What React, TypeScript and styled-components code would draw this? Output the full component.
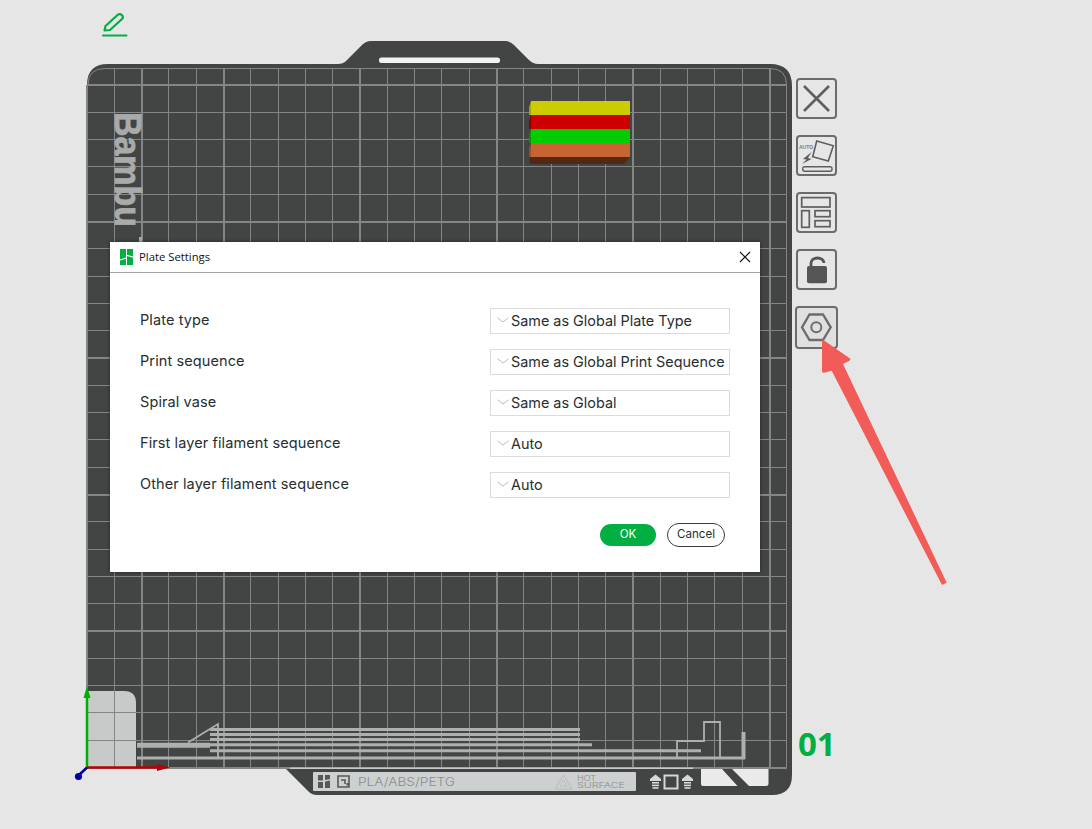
import React from 'react'
import styled, { createGlobalStyle } from 'styled-components'

const GlobalStyle = createGlobalStyle`
  html, body {
    margin: 0;
    padding: 0;
    background: #e6e6e6;
  }
  * {
    box-sizing: border-box;
  }
`

const Page = styled.div`
  position: relative;
  width: 1092px;
  height: 829px;
  padding: 12px 0 0 87px;
  overflow: hidden;
  background: #e6e6e6;
  font-family: Inter, 'Noto Sans', sans-serif;
`

const PencilSvg = styled.svg`
  display: block;
  width: 26px;
  height: 26px;
  margin: 0 0 3px 15px;
`

const Workspace = styled.div`
  display: flex;
  gap: 4px;
  height: 754px;
`

const PlateSvg = styled.svg`
  display: block;
  flex: none;
  width: 705px;
  height: 754px;
  overflow: visible;
`

const Toolbar = styled.div`
  display: flex;
  flex-direction: column;
  gap: 16px;
  padding-top: 37px;
`

const ToolButton = styled.button<{ $large?: boolean }>`
  display: block;
  width: ${({ $large }) => ($large ? 43 : 41)}px;
  height: ${({ $large }) => ($large ? 43 : 41)}px;
  margin-left: ${({ $large }) => ($large ? -1 : 0)}px;
  padding: 0;
  border: 2px solid #6c6c6c;
  border-radius: 4px;
  background: ${({ $large }) => ($large ? '#e0e0e0' : '#e6e6e6')};
  svg {
    display: block;
    margin: -2px;
  }
`

const PlateIndex = styled.div`
  margin: auto 0 34px 2px;
  font-family: 'Open Sans', sans-serif;
  font-size: 33px;
  font-weight: 700;
  line-height: 34px;
  color: #00ae42;
`

const Pointer = styled.svg`
  position: absolute;
  left: 815px;
  top: 335px;
  width: 135px;
  height: 255px;
`

const Dialog = styled.div`
  position: absolute;
  left: 110px;
  top: 242px;
  width: 650px;
  height: 330px;
  background: #fff;
  box-shadow: 0 0 4px rgba(0, 0, 0, 0.45);
`

const TitleBar = styled.div`
  display: flex;
  align-items: center;
  height: 31px;
  padding: 0 9px 1px 10px;
  border-bottom: 1px solid #a3a3a3;
`

const TitleText = styled.div`
  flex: 1;
  margin-left: 6px;
  font-family: 'Open Sans', sans-serif;
  font-size: 11.3px;
  color: #111;
`

const Form = styled.div`
  display: flex;
  flex-direction: column;
  gap: 15px;
  padding: 35px 30px 0;
`

const Row = styled.div`
  display: flex;
  align-items: center;
  justify-content: space-between;
  height: 26px;
`

const RowLabel = styled.div`
  margin-top: -3px;
  font-size: 14.5px;
  letter-spacing: 0.1px;
  color: #262e30;
`

const SelectBox = styled.div`
  display: flex;
  align-items: center;
  gap: 2px;
  width: 240px;
  height: 26px;
  padding: 0 0 2px 6px;
  border: 1px solid #dbdbdb;
  font-size: 14.4px;
  color: #262e30;
  white-space: nowrap;
`

const Footer = styled.div`
  display: flex;
  justify-content: flex-end;
  align-items: center;
  gap: 11px;
  margin-top: 25px;
  padding-right: 35px;
`

const PillButton = styled.button<{ $primary?: boolean }>`
  width: ${({ $primary }) => ($primary ? 56 : 58)}px;
  height: ${({ $primary }) => ($primary ? 22 : 24)}px;
  padding: 0 0 2px;
  border: ${({ $primary }) => ($primary ? 'none' : '1px solid #3c3c3c')};
  border-radius: 12px;
  background: ${({ $primary }) => ($primary ? '#00ae42' : '#fff')};
  color: ${({ $primary }) => ($primary ? '#fff' : '#262e30')};
  font-family: Inter, sans-serif;
  font-size: 11.6px;
`

const STEP = 27.3
const gridIndexes = Array.from({ length: 26 }, (_, i) => i)

// odd widths sit on half pixels so that the lines stay crisp
const snap = (v: number, thick: boolean) => (thick ? Math.round(v) : Math.floor(v) + 0.5)

const Chevron = () => (
  <svg width="12" height="6" viewBox="0 0 12 6" fill="none">
    <path d="M0.5 0.8 L6 5 L11.5 0.8" stroke="#bcbcbc" strokeWidth="1" />
  </svg>
)

const StripArrow = ({ x }: { x: number }) => (
  <g fill="#d6d8d7">
    <path d={`M${x} 779 L${x + 5.5} 774.5 L${x + 11} 779 V781 H${x} Z`} />
    <rect x={x + 2} y={782} width={7} height={1.6} />
    <rect x={x + 2} y={784.6} width={7} height={1.6} />
    <rect x={x + 2.5} y={787.2} width={6} height={1.6} />
  </g>
)

const Plate = () => (
  <PlateSvg viewBox="87 41 705 754">
    <path
      d="M87 85 Q87 64 108 64 H338 Q343 64 346 61 L362 45 Q366 41 371 41 H505 Q510 41 514 45 L529 60 Q533 64 538 64 H770 Q792 64 792 86 V775 Q792 795 772 795 H317 Q312 795 309 792 L285 768 H87 Z"
      fill="#434545"
    />
    <rect x="379" y="57.5" width="121" height="5.5" rx="2.5" fill="#f2f2f2" />

    <path d="M87 767 V691 H124 Q136 691 136 703 V767 Z" fill="#c8caca" />

    {gridIndexes.map((n) => {
      const thick = n % 5 === 0 || n === 2
      const x = snap(87 + STEP * n, thick)
      return (
        <line
          key={`v${n}`}
          x1={x}
          x2={x}
          y1={n === 0 ? 85 : 68}
          y2={768}
          stroke="#838685"
          strokeWidth={thick ? 2 : 1}
        />
      )
    })}
    {gridIndexes.map((n) => {
      const thick = n % 5 === 0
      const y = snap(85 + STEP * n, thick)
      return <line key={`h${n}`} x1={87} x2={787} y1={y} y2={y} stroke="#838685" strokeWidth={thick ? 2 : 1} />
    })}
    <path d="M88 85 Q88 68.5 105 68.5 H770 Q786.5 68.5 786.5 85 V768" fill="none" stroke="#838685" strokeWidth="1" />

    <text
      transform="translate(115 112) rotate(90)"
      fontFamily="'Liberation Sans', sans-serif"
      fontWeight="700"
      fontSize="37"
      fill="#a9abaa"
      stroke="#a9abaa"
      strokeWidth="0.8"
      textLength="115"
      lengthAdjust="spacingAndGlyphs"
    >
      Bambu
    </text>
    <rect x="139" y="237" width="3" height="5" fill="#a9abaa" />

    <g stroke="#aeb0af" fill="none">
      <path d="M137 745.3 H210" strokeWidth="5" />
      <path d="M137 758 H745" strokeWidth="3" />
      <path d="M210 729.5 H580 M210 734.5 H580 M210 739.5 H580 M210 744.7 H592" strokeWidth="3" />
      <path d="M210 750.7 H701" strokeWidth="3" />
      <path d="M188 742.5 L218 724 V757" strokeWidth="1.8" />
      <path d="M677 757 V741 H704 V722 H720 V757" strokeWidth="1.8" />
      <path d="M743.5 732 V759" strokeWidth="4" />
      <path d="M290 768.3 H693" strokeWidth="1.5" stroke="#c8caca" />
    </g>

    <path d="M701 769 H722 L737.5 786 H703 Q701 786 701 784 Z" fill="#eaeaea" />
    <path d="M732 769 H768.5 V784 Q768.5 786 766 786 H749 Z" fill="#eaeaea" />

    <rect x="313" y="772" width="323" height="19" rx="1" fill="#ccd0d0" />
    <path
      d="M318 775 H323 V780.5 H318 Z M325 775 H330 V779 L325 780 Z M318 782 H323 V788 H318 Z M325 781.5 L330 780.5 V788 H325 Z"
      fill="#555857"
    />
    <path d="M338 776 H349 V787 H338 Z" fill="none" stroke="#555857" strokeWidth="1.6" />
    <path d="M341 780 H345 V784" fill="none" stroke="#555857" strokeWidth="1.6" />
    <rect x="346.5" y="783" width="2.5" height="2.5" fill="#555857" />
    <text
      x="358"
      y="786"
      fontFamily="Inter, sans-serif"
      fontWeight="300"
      fontSize="12"
      fill="#8a8e8d"
      textLength="97"
      lengthAdjust="spacingAndGlyphs"
    >
      PLA/ABS/PETG
    </text>
    <path d="M563.5 775 L572 789 H555 Z" fill="none" stroke="#b4b8b7" strokeWidth="0.8" />
    <path d="M563.5 780 L567 786 H560 Z" fill="none" stroke="#b4b8b7" strokeWidth="0.6" />
    <text
      x="577"
      y="780.5"
      fontFamily="Inter, sans-serif"
      fontWeight="300"
      fontSize="7"
      fill="#8a8e8d"
      textLength="19"
      lengthAdjust="spacingAndGlyphs"
    >
      HOT
    </text>
    <text
      x="577"
      y="788"
      fontFamily="Inter, sans-serif"
      fontWeight="300"
      fontSize="7"
      fill="#8a8e8d"
      textLength="48"
      lengthAdjust="spacingAndGlyphs"
    >
      SURFACE
    </text>
    <StripArrow x={650} />
    <rect x="664.5" y="775.5" width="13" height="13" fill="none" stroke="#d6d8d7" strokeWidth="2" />
    <StripArrow x={682} />

    <path d="M531 101 L529 107 V115 H531 Z" fill="#a3a300" />
    <path d="M531 115 L529 121 V129 H531 Z" fill="#8f0000" />
    <path d="M531 129 L529 135 V143 H531 Z" fill="#009a00" />
    <path d="M531 143 L529 149 V157 H531 Z" fill="#96502a" />
    <rect x="531" y="101" width="99" height="14" fill="#cccc00" />
    <rect x="531" y="115" width="99" height="14" fill="#cc0000" />
    <rect x="531" y="129" width="99" height="14" fill="#00cc00" />
    <rect x="531" y="143" width="99" height="14" fill="#c86432" />
    <path d="M529.5 157 H630 L624 164 H529.5 Z" fill="#502814" />

    <path d="M87 767 V694" stroke="#00b000" strokeWidth="2.5" />
    <path d="M87 686 L90.5 698 H83.5 Z" fill="#00b000" />
    <path d="M87 767.5 H158" stroke="#b80000" strokeWidth="2.5" />
    <path d="M170 767.5 L157 771 V764 Z" fill="#b80000" />
    <path d="M87 767.5 L79 775" stroke="#0000a8" strokeWidth="2.5" />
    <circle cx="78.5" cy="776.5" r="3.6" fill="#0000a8" />
  </PlateSvg>
)

const App = () => {
  const rows = [
    { label: 'Plate type', value: 'Same as Global Plate Type' },
    { label: 'Print sequence', value: 'Same as Global Print Sequence' },
    { label: 'Spiral vase', value: 'Same as Global' },
    { label: 'First layer filament sequence', value: 'Auto' },
    { label: 'Other layer filament sequence', value: 'Auto' },
  ]

  return (
    <Page>
      <GlobalStyle />
      <PencilSvg viewBox="0 0 26 26" fill="none">
        <path
          d="M2.5 18.5 L3.5 14 L15.5 3 Q17.8 1.2 19.8 3 Q21.8 5.2 20 7 L8 18 Z"
          stroke="#00ae42"
          strokeWidth="2.2"
          strokeLinejoin="round"
        />
        <path d="M1 23.5 H24.5" stroke="#00ae42" strokeWidth="2" strokeLinecap="round" />
      </PencilSvg>

      <Workspace>
        <Plate />
        <Toolbar>
          <ToolButton>
            <svg width="41" height="41" viewBox="0 0 41 41" fill="none">
              <path d="M8 8 L33 33 M33 8 L8 33" stroke="#5f5f5f" strokeWidth="2.6" />
            </svg>
          </ToolButton>
          <ToolButton>
            <svg width="41" height="41" viewBox="0 0 41 41" fill="none">
              <text x="3" y="14" fontFamily="'Liberation Sans', sans-serif" fontWeight="700" fontSize="5" fill="#7a7a7a">
                AUTO
              </text>
              <path d="M20.7 6 L37.3 10.7 L32.3 26 L16.7 21.7 Z" stroke="#5f5f5f" strokeWidth="1.6" />
              <path d="M15.5 17 L7 24 L10.5 24.5 L6 29 L15.5 24 L12 23 Z" fill="#5f5f5f" />
              <rect x="6.7" y="31.7" width="29.3" height="4.6" rx="2" stroke="#5f5f5f" strokeWidth="1.4" />
            </svg>
          </ToolButton>
          <ToolButton>
            <svg width="41" height="41" viewBox="0 0 41 41" fill="none" stroke="#5f5f5f" strokeWidth="1.7">
              <rect x="5.7" y="5.6" width="28.3" height="9.4" />
              <rect x="5.7" y="18.7" width="7.6" height="16.6" />
              <rect x="19" y="18.7" width="15" height="6" />
              <rect x="19" y="28.7" width="15" height="6" />
            </svg>
          </ToolButton>
          <ToolButton>
            <svg width="41" height="41" viewBox="0 0 41 41" fill="none">
              <rect x="11" y="17" width="20" height="17.3" rx="2" fill="#555" />
              <path d="M15 17 V14 a6.5 5 0 0 1 13 0" stroke="#555" strokeWidth="2.8" />
            </svg>
          </ToolButton>
          <ToolButton $large>
            <svg width="43" height="43" viewBox="0 0 43 43" fill="none">
              <path d="M7 21.3 L14.5 8.5 H28 L35.7 21.3 L28 34 H14.5 Z" stroke="#6c6c6c" strokeWidth="2.3" />
              <circle cx="21.3" cy="21.3" r="5" stroke="#6c6c6c" strokeWidth="2" />
            </svg>
          </ToolButton>
          <PlateIndex>01</PlateIndex>
        </Toolbar>
      </Workspace>

      <Pointer viewBox="815 335 135 255">
        <path
          d="M822.7 339.5 L850 358.5 Q851 360 849 361 L843 364 L946.7 582.7 L942 585 L831.7 370.7 L824 372.7 Q822 373 822 371 V341 Q822 339 822.7 339.5 Z"
          fill="#f25c58"
        />
      </Pointer>

      <Dialog>
        <TitleBar>
          <svg width="13" height="16" viewBox="0 0 13 16">
            <path d="M0 0 H6 V8.5 L0 10.5 Z M0 11.5 L6 9.8 V16 H0 Z" fill="#00ae42" />
            <path d="M7 0 H13 V7.5 L7 5.8 Z M7 7 L13 8.7 V16 H7 Z" fill="#00ae42" />
          </svg>
          <TitleText>Plate Settings</TitleText>
          <svg width="12" height="12" viewBox="0 0 12 12">
            <path d="M1 1 L11 11 M11 1 L1 11" stroke="#1a1a1a" strokeWidth="1.2" />
          </svg>
        </TitleBar>
        <Form>
          {rows.map((row) => (
            <Row key={row.label}>
              <RowLabel>{row.label}</RowLabel>
              <SelectBox>
                <Chevron />
                {row.value}
              </SelectBox>
            </Row>
          ))}
        </Form>
        <Footer>
          <PillButton $primary>OK</PillButton>
          <PillButton>Cancel</PillButton>
        </Footer>
      </Dialog>
    </Page>
  )
}

export default App
